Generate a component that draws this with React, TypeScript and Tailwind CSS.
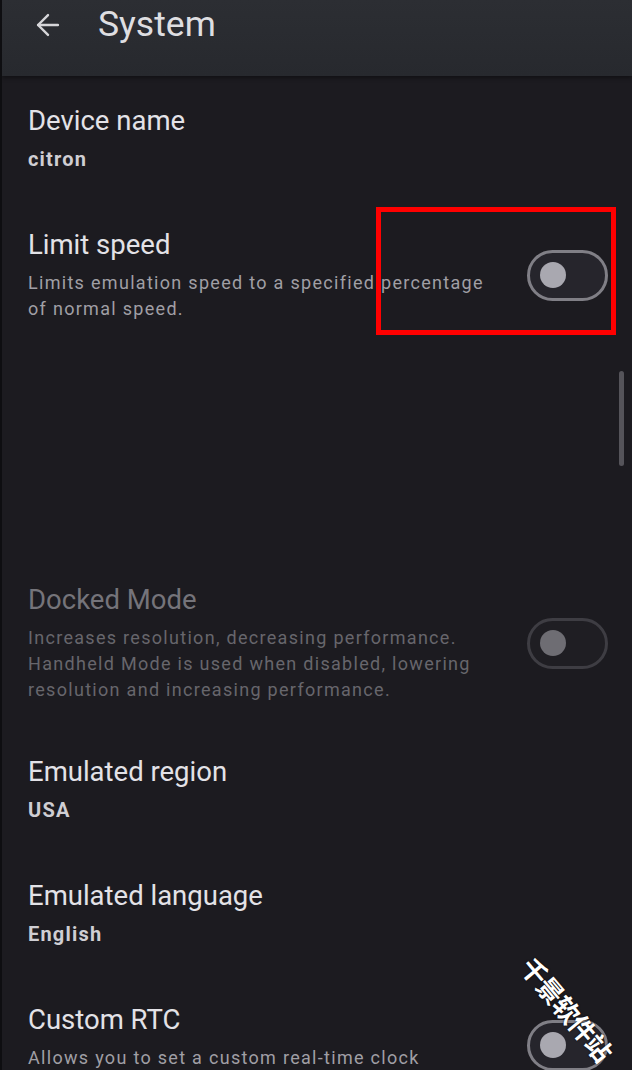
import { ArrowLeft } from "lucide-react";

type Item = {
  title: string;
  value?: string;
  lines?: string[];
  toggle?: boolean;
  disabled?: boolean;
  tight?: boolean;
  lowToggle?: boolean;
};

const TOP_ITEMS: Item[] = [
  { title: "Device name", value: "citron" },
  {
    title: "Limit speed",
    lines: ["Limits emulation speed to a specified percentage", "of normal speed."],
    toggle: true,
  },
];

const BOTTOM_ITEMS: Item[] = [
  {
    title: "Docked Mode",
    lines: [
      "Increases resolution, decreasing performance.",
      "Handheld Mode is used when disabled, lowering",
      "resolution and increasing performance.",
    ],
    toggle: true,
    disabled: true,
    tight: true,
  },
  { title: "Emulated region", value: "USA" },
  { title: "Emulated language", value: "English" },
  {
    title: "Custom RTC",
    lines: ["Allows you to set a custom real-time clock"],
    toggle: true,
    lowToggle: true,
  },
];

function Toggle({ disabled, low }: { disabled?: boolean; low?: boolean }) {
  return (
    <div
      className={`w-[81px] h-[51px] rounded-full border-[3px] flex items-center px-[10px] shrink-0 ${
        disabled ? "border-[#3e3d43] bg-[#1f1e23]" : "border-[#807f86] bg-[#26252c]"
      } ${low ? "mt-[16px]" : ""}`}
    >
      <div
        className={`w-[26px] h-[26px] rounded-full ${disabled ? "bg-[#6e6d73]" : "bg-[#a9a8b0]"}`}
      />
    </div>
  );
}

function SettingRow({ item }: { item: Item }) {
  const title = item.disabled ? "text-[#75747a]" : "text-[#e3e2e7]";
  const desc = item.disabled ? "text-[#67666c]" : "text-[#a09fa5]";
  return (
    <div
      className={`flex items-center justify-between pl-[26px] pr-[24px] pt-[28px] ${
        item.tight ? "pb-[24px]" : "pb-[28px]"
      }`}
    >
      <div className="flex flex-col gap-[8px]">
        <div className={`text-[27.5px] leading-[34px] ${title}`}>{item.title}</div>
        {item.value && (
          <div className="text-[20px] leading-[26px] font-bold tracking-[1.2px] text-[#cfced3]">
            {item.value}
          </div>
        )}
        {item.lines && (
          <div className={`text-[18px] leading-[26px] tracking-[1.3px] ${desc}`}>
            {item.lines.map((l) => (
              <div key={l}>{l}</div>
            ))}
          </div>
        )}
      </div>
      {item.toggle && <Toggle disabled={item.disabled} low={item.lowToggle} />}
    </div>
  );
}

export default function App() {
  return (
    <div
      className="relative w-[632px] h-[1070px] overflow-hidden bg-[#1c1b20] border-l-[2px] border-[#0e0e11]"
      style={{ fontFamily: "Roboto, 'Noto Sans CJK SC', sans-serif" }}
    >
      {/* Toolbar */}
      <div className="h-[76px] bg-gradient-to-b from-[#2c2e33] to-[#27292e] flex items-start pt-[5px] shadow-[0_2px_4px_rgba(0,0,0,0.4)]">
        <ArrowLeft className="ml-[29px] mt-[3px] text-[#d6d6d9]" size={34} strokeWidth={1.7} />
        <div className="ml-[33px] text-[35.5px] leading-[38px] text-[#dedee1]">System</div>
      </div>

      {TOP_ITEMS.map((item) => (
        <SettingRow key={item.title} item={item} />
      ))}

      <div className="h-[205px]" />

      {BOTTOM_ITEMS.map((item) => (
        <SettingRow key={item.title} item={item} />
      ))}

      {/* Scrollbar */}
      <div className="absolute left-[617px] top-[371px] w-[5px] h-[95px] rounded-full bg-[#55545a]" />

      {/* Highlight box */}
      <div className="absolute left-[374px] top-[207px] w-[240px] h-[128px] border-[5px] border-[#ff0000]" />

      {/* Watermark */}
      <div
        className="absolute left-[501px] top-[997px] rotate-[50deg] text-[26px] leading-none font-bold text-white tracking-[-1px] whitespace-nowrap"
        style={{ textShadow: "0 0 2px #000" }}
      >
        千景软件站
      </div>
    </div>
  );
}
